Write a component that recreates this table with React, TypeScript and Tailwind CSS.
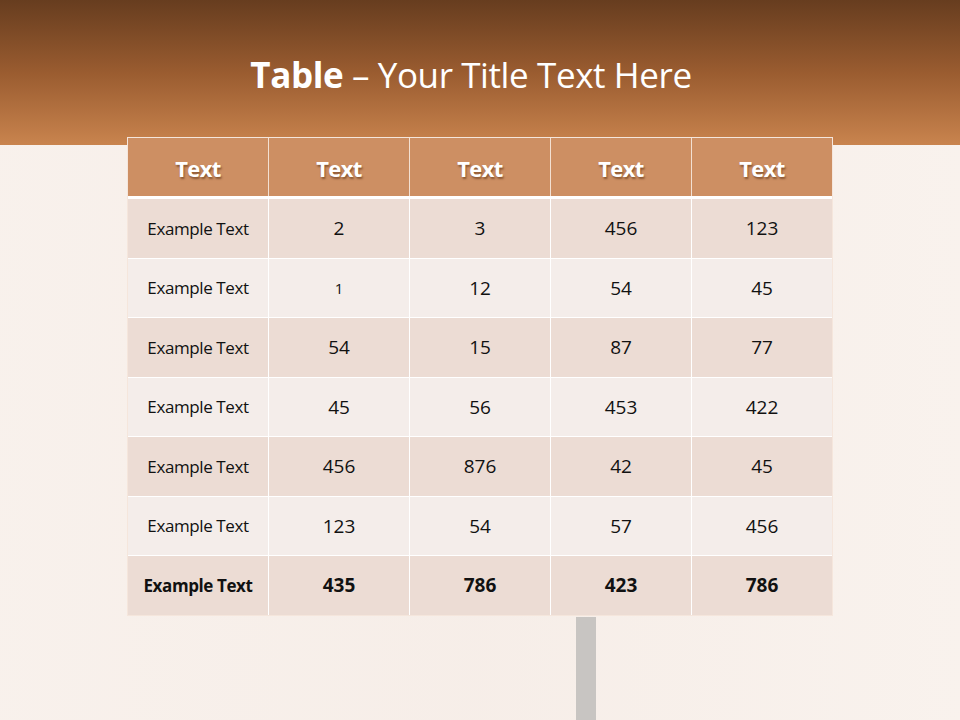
import React from "react";

const rows: { label: string; vals: string[]; bold?: boolean }[] = [
  { label: "Example Text", vals: ["2", "3", "456", "123"] },
  { label: "Example Text", vals: ["1", "12", "54", "45"] },
  { label: "Example Text", vals: ["54", "15", "87", "77"] },
  { label: "Example Text", vals: ["45", "56", "453", "422"] },
  { label: "Example Text", vals: ["456", "876", "42", "45"] },
  { label: "Example Text", vals: ["123", "54", "57", "456"] },
  { label: "Example Text", vals: ["435", "786", "423", "786"], bold: true },
];

export default function App() {
  return (
    <div
      className="relative w-[960px] h-[720px] overflow-hidden bg-[#f7efea]"
      style={{ fontFamily: '"Open Sans", "Noto Sans", sans-serif' }}
    >
      {/* background texture hints */}
      <div className="absolute left-[0px] top-[145px] w-[960px] h-[575px] bg-gradient-to-r from-[#f9f2ed] via-[#f6ede7] to-[#faf4ef] opacity-60" />
      <div className="absolute left-[576px] top-[617px] w-[20px] h-[103px] bg-[#c8c5c2]" />

      {/* header band */}
      <div className="relative h-[145px] bg-gradient-to-b from-[#673d1f] via-[#9a5c30] to-[#c9844e] flex justify-center pt-[51px] pr-[18px]">
        <div className="text-white text-[35px] leading-[48px] tracking-[-0.4px]">
          <span className="font-bold">Table</span> – Your Title Text Here
        </div>
      </div>

      {/* table */}
      <div className="absolute left-[127px] top-[137px] w-[706px] border border-[#f5e6dc] bg-white">
        <div className="grid grid-cols-5 gap-x-px bg-[#f3e0d2] border-b-[3px] border-white">
          {["Text", "Text", "Text", "Text", "Text"].map((t, i) => (
            <div
              key={i}
              className="h-[58px] pt-[3px] bg-[#cd8f63] flex items-center justify-center text-white font-bold text-[22px] tracking-[-0.6px]"
              style={{ textShadow: "1px 2px 2px rgba(80,40,10,0.55)" }}
            >
              {t}
            </div>
          ))}
        </div>
        <div className="flex flex-col gap-y-px bg-white">
          {rows.map((r, ri) => (
            <div key={ri} className="grid grid-cols-5 gap-x-px h-[58.5px] bg-white">
              <div
                className={`${ri % 2 === 0 ? "bg-[#ecdcd4]" : "bg-[#f4edea]"} flex items-center justify-center text-[#111] text-[17px] tracking-[-0.4px] ${r.bold ? "font-bold" : ""}`}
              >
                {r.label}
              </div>
              {r.vals.map((v, vi) => (
                <div
                  key={vi}
                  className={`${ri % 2 === 0 ? "bg-[#ecdcd4]" : "bg-[#f4edea]"} flex items-center justify-center text-[#111] ${ri === 1 && vi === 0 ? "text-[15px]" : "text-[19px]"} ${r.bold ? "font-bold" : ""}`}
                >
                  {v}
                </div>
              ))}
            </div>
          ))}
        </div>
      </div>
    </div>
  );
}
